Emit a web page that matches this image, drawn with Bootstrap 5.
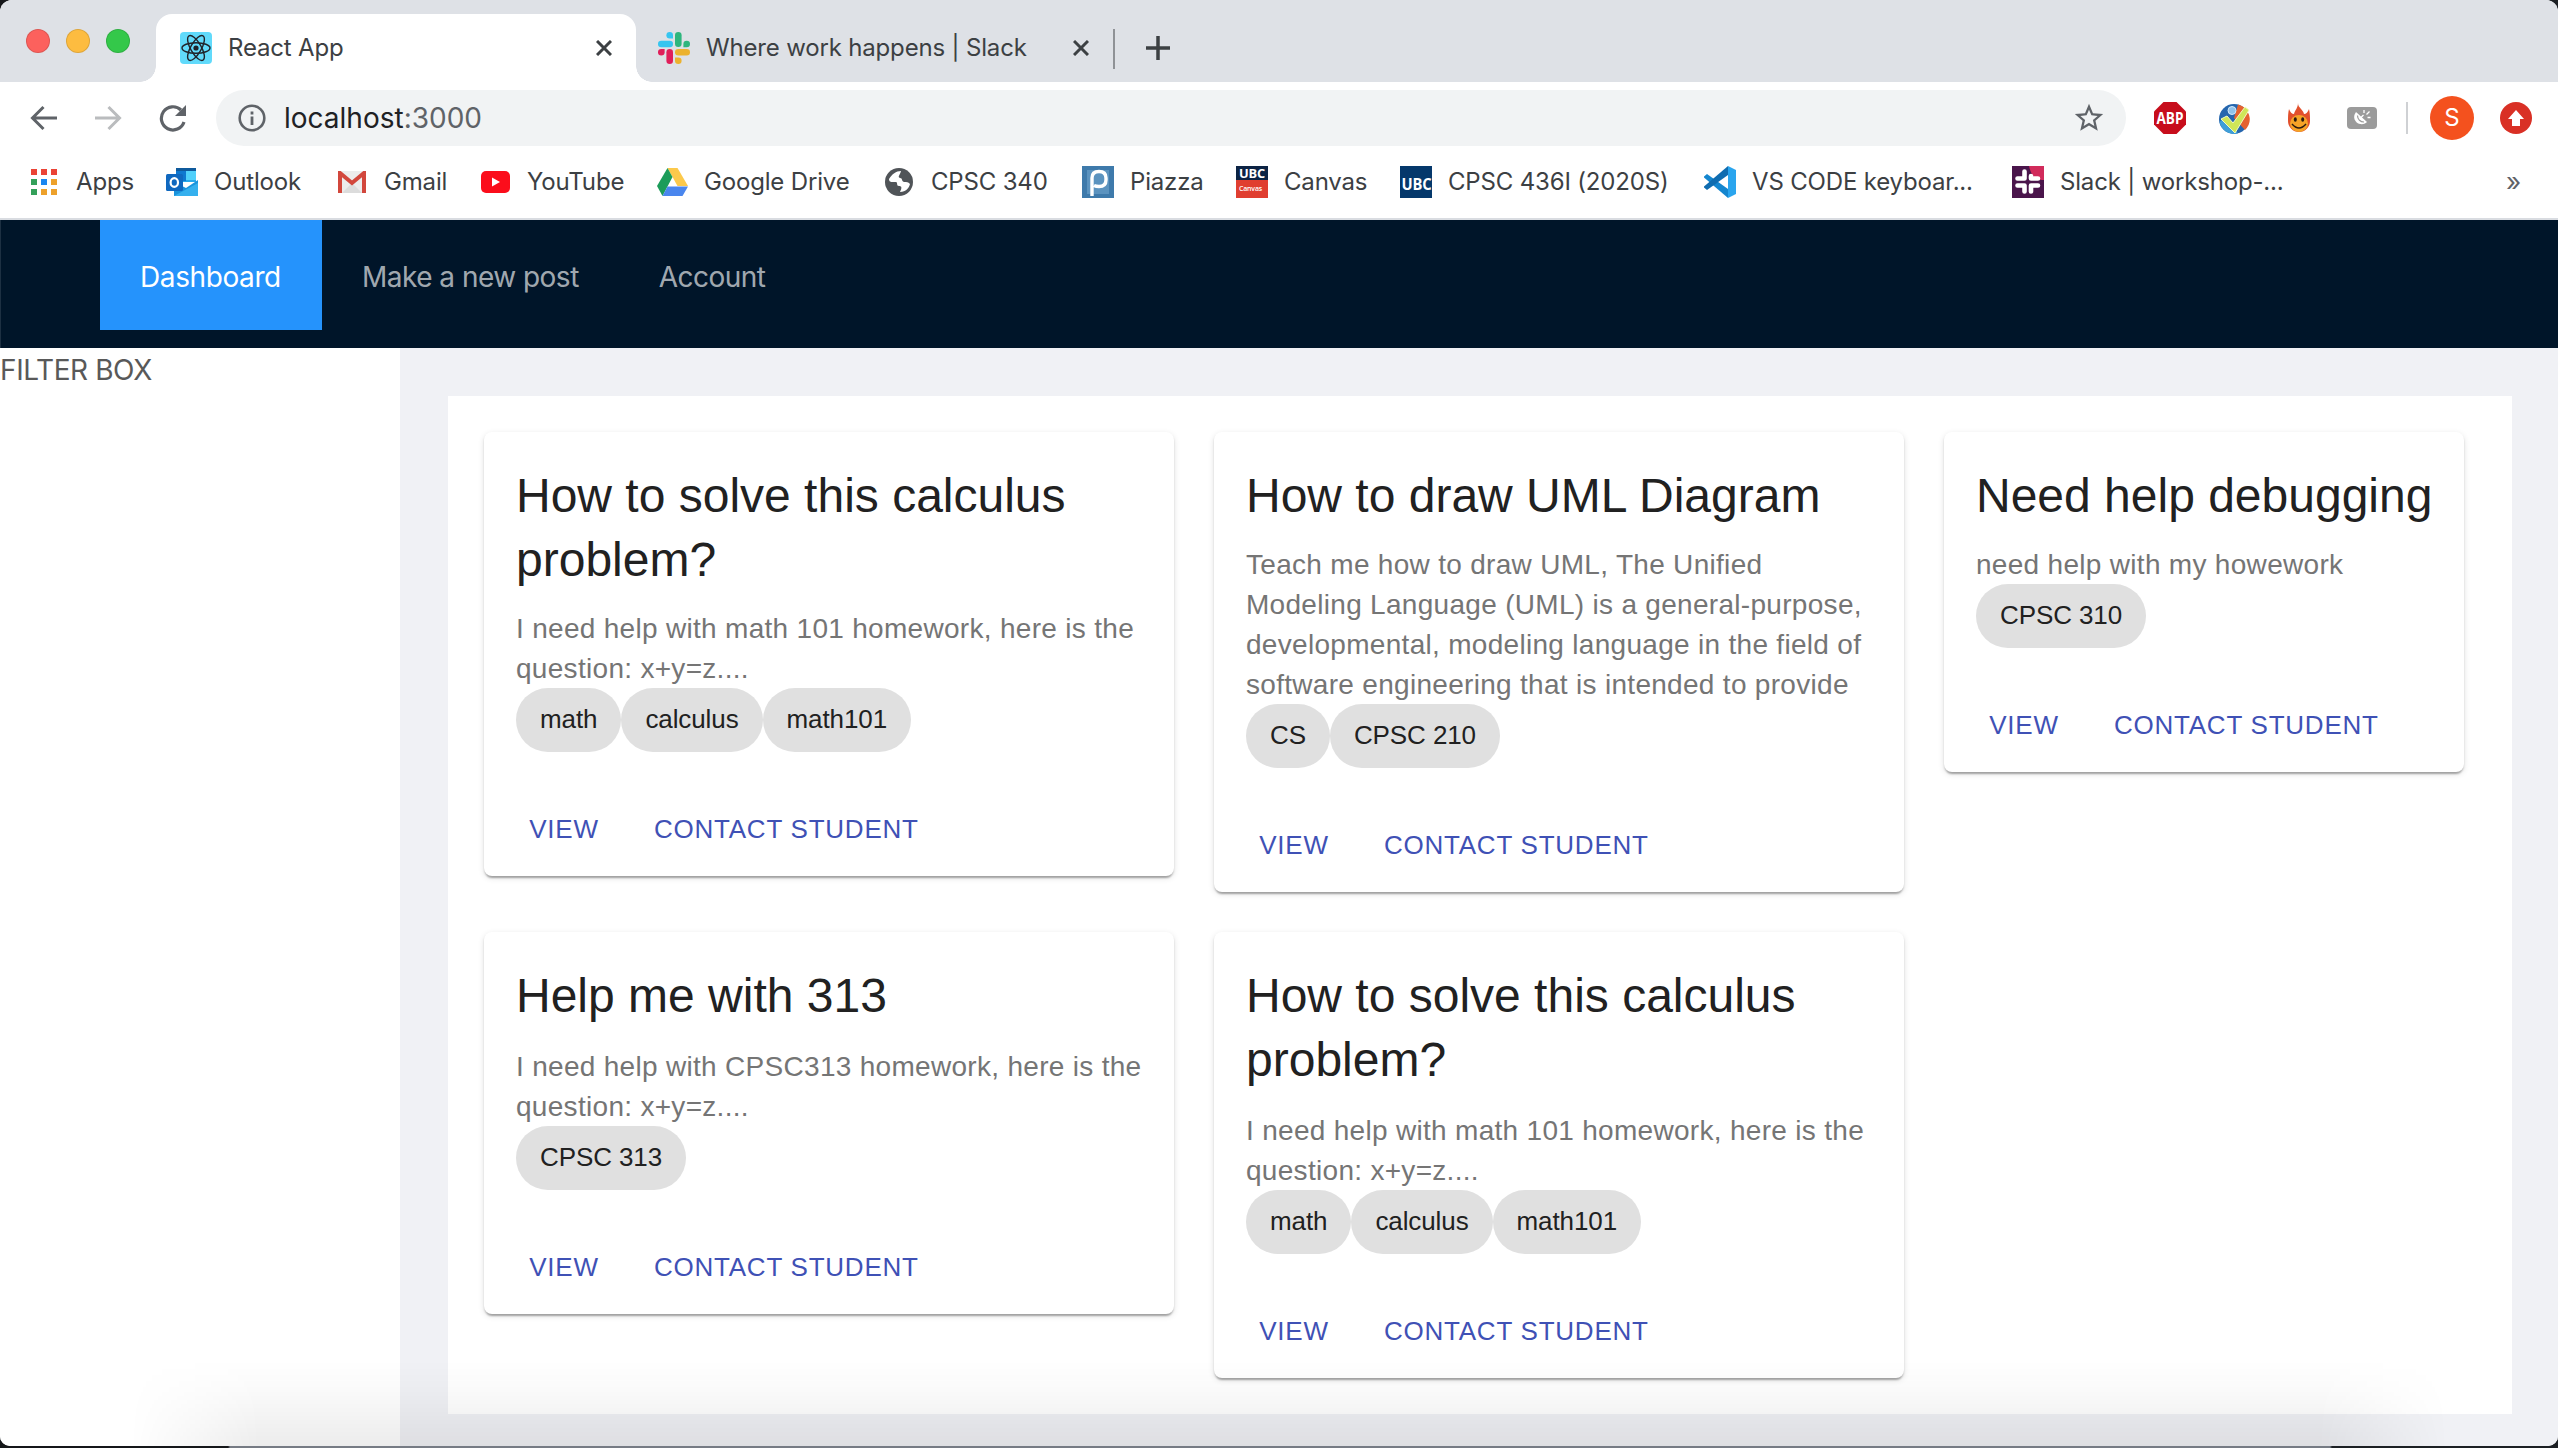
<!DOCTYPE html>
<html lang="en">
<head>
<meta charset="utf-8">
<title>React App</title>
<link href="https://cdn.jsdelivr.net/npm/bootstrap@5.3.0/dist/css/bootstrap.min.css" rel="stylesheet">
<style>
html,body{height:100%;margin:0}
body{background:linear-gradient(90deg,#15171a 228px,#767b84 230px,#767b84 2330px,#1c2024 2332px);overflow:hidden;font-family:Inter,"Noto Sans",sans-serif;color:#3c4043}
svg{display:block;flex:none}
.window{width:2558px;height:1446px;background:#fff;border-radius:12px 12px 10px 10px;overflow:hidden}
.tabstrip{height:82px;background:#dee1e6;padding-left:26px}
.dots{margin-right:22px;padding-bottom:29px}
.dot{width:24px;height:24px;border-radius:50%;border:1px solid rgba(0,0,0,.12);margin-right:16px}
.dot-red{background:#fc615d}
.dot-amber{background:#fdbc40}
.dot-green{background:#34c84a}
.tab-on{width:480px;height:68px;background:#fff;border-radius:16px 16px 0 0;padding:0 24px;margin-left:4px;position:relative}
.tab-on::before,.tab-on::after{content:"";position:absolute;bottom:0;width:16px;height:16px}
.tab-on::before{left:-16px;background:radial-gradient(circle at 0 0,transparent 15.5px,#fff 16px)}
.tab-on::after{right:-16px;background:radial-gradient(circle at 100% 0,transparent 15.5px,#fff 16px)}
.tab-off{height:68px;padding-left:22px;width:477px}
.ui{font-size:24px;line-height:32px;letter-spacing:-.17px;white-space:nowrap}
.tabsep{width:2px;height:40px;background:#8f9296;margin-bottom:13px}
.plus{margin:0 0 22px 31px}
.toolbar{height:72px}
.omni{width:1910px;height:56px;border-radius:28px;background:#f1f3f4;padding:0 20px 0 22px;margin-left:29px}
.url{font-size:28px;color:#202124;letter-spacing:0;margin-left:18px}
.url span{color:#5f6368}
.toolsep{margin-left:29px;width:2px;height:32px;background:#cfd1d4}
.marks{height:64px;padding:0 0 8px 28px}
.bm{width:var(--w);flex:none}
.bm .ico{width:32px;margin-right:16px;display:flex;justify-content:center;flex:none}
.more{margin-right:37px;font-size:26px;color:#5f6368}
.avatar{width:44px;height:44px;border-radius:50%;background:#f4511e;color:#fff;font-size:24px;margin-left:22px}
.rule{height:2px;background:#d9dce1}
.topmenu{height:128px;background:#001529;border-left:1px solid #1d3042;padding-left:99px}
.topmenu .nav-link{height:110px;padding:2px 40px 0;font-size:28px;line-height:110px;letter-spacing:-.52px;color:rgba(255,255,255,.65);white-space:nowrap}
.topmenu .nav-link.active{background:#2593fc;color:#fff;width:222px;letter-spacing:-.4px}
.sider{width:400px;flex:none;background:#fff;font-size:28px;line-height:45px;letter-spacing:-.4px;color:#595959}
.pagebg{background:#f0f1f5;padding:48px 46px 32px 48px}
.board{background:#fff;height:1018px;padding:36px 0 0 36px}
.cards{gap:40px}
.post{border:0;border-radius:8px;width:690px;flex:none;--bs-card-bg:#fff;font-family:"Liberation Sans",Arial,sans-serif;box-shadow:0 4px 2px -2px rgba(0,0,0,.2),0 2px 2px 0 rgba(0,0,0,.14),0 2px 6px 0 rgba(0,0,0,.12)}
.post.narrow{width:520px}
.post .card-body{padding:32px 32px 30px}
.post h2{font-size:48px;line-height:64px;font-weight:400;margin:0 0 17px;color:#212121;white-space:nowrap}
.post p{font-size:28px;line-height:40px;letter-spacing:.3px;color:#757575;margin:0 0 -1px;white-space:nowrap}
.post.low h2{margin-bottom:19px}
.chip{height:64px;border-radius:32px;background:#e0e0e0;color:#212121;font-size:26px;line-height:62px;letter-spacing:-.1px;padding:0 24px}
.post .card-footer{background:none;border:0;padding:16px;height:94px;gap:16px}
.post .btn{--bs-btn-color:#3f51b5;height:62px;min-width:128px;padding:0 10px;border:0;font-size:26px;line-height:62px;letter-spacing:.76px;white-space:nowrap}
.fade-bottom{position:absolute;left:130px;right:110px;top:1360px;height:86px;background:linear-gradient(rgba(0,0,0,0),rgba(0,0,0,.02) 35%,rgba(0,0,0,.075));-webkit-mask-image:linear-gradient(90deg,transparent,#000 130px,#000 calc(100% - 130px),transparent);pointer-events:none}
</style>
<script src="https://cdn.jsdelivr.net/npm/bootstrap@5.3.0/dist/js/bootstrap.bundle.min.js"></script>
</head>
<body>
<div class="window d-flex flex-column">
  <div class="tabstrip d-flex align-items-end flex-shrink-0">
    <div class="dots d-flex"><span class="dot dot-red"></span><span class="dot dot-amber"></span><span class="dot dot-green me-0"></span></div>
    <div class="tab-on d-flex align-items-center">
      <svg width="32" height="32" viewBox="0 0 32 32"><rect width="32" height="32" rx="4" fill="#61dafb"/><g fill="none" stroke="#20232a" stroke-width="1.4"><ellipse cx="16" cy="16" rx="14" ry="5.3"/><ellipse cx="16" cy="16" rx="14" ry="5.3" transform="rotate(60 16 16)"/><ellipse cx="16" cy="16" rx="14" ry="5.3" transform="rotate(120 16 16)"/></g><circle cx="16" cy="16" r="2.6" fill="#20232a"/></svg>
      <span class="ui ms-3">React App</span>
      <svg class="ms-auto" width="16" height="16" viewBox="0 0 16 16"><path d="M1 1l14 14M15 1L1 15" stroke="#3c4043" stroke-width="3"/></svg>
    </div>
    <div class="tab-off d-flex align-items-center">
      <svg width="32" height="32" viewBox="0 0 32 32"><g fill="#36c5f0"><path d="M11.7 0a3.3 3.3 0 0 0 0 6.6H15V3.300A3.300 3.300 0 0 0 11.700 0z"/><rect y="8.700" width="15" height="6.600" rx="3.300"/></g><g fill="#2eb67d"><rect x="17" width="6.600" height="15" rx="3.300"/><path d="M32 12a3.300 3.300 0 0 0-6.600 0v3.300h3.300A3.300 3.300 0 0 0 32 12z"/></g><g fill="#e01e5a"><path d="M0 20.300a3.300 3.300 0 0 0 6.600 0V17H3.300A3.300 3.300 0 0 0 0 20.300z"/><rect x="8.400" y="17" width="6.600" height="15" rx="3.300"/></g><g fill="#ecb22e"><rect x="17" y="17" width="15" height="6.600" rx="3.300"/><path d="M20.300 32a3.300 3.300 0 0 0 0-6.600H17v3.300a3.300 3.300 0 0 0 3.300 3.300z"/></g></svg>
      <span class="ui ms-3">Where work happens | Slack</span>
      <svg class="ms-auto me-4" width="16" height="16" viewBox="0 0 16 16"><path d="M1 1l14 14M15 1L1 15" stroke="#3c4043" stroke-width="3"/></svg>
    </div>
    <span class="tabsep"></span>
    <svg class="plus" width="24" height="24" viewBox="0 0 24 24"><path d="M12 0v24M0 12h24" stroke="#3c4043" stroke-width="3.500"/></svg>
  </div>
  <div class="toolbar d-flex align-items-center flex-shrink-0">
    <svg style="margin-left:30px" width="28" height="26" viewBox="0 0 28 26"><path d="M27 13H3M13.500 2L2.500 13l11 11" fill="none" stroke="#5f6368" stroke-width="3"/></svg>
    <svg style="margin-left:37px" width="28" height="26" viewBox="0 0 28 26"><path d="M0 13h24M13.500 2l11 11-11 11" fill="none" stroke="#babcbe" stroke-width="3"/></svg>
    <svg style="margin-left:36px" width="28" height="28" viewBox="0 0 28 28"><path d="M25 18A11.600 11.600 0 1 1 22 6" fill="none" stroke="#5f6368" stroke-width="3.200"/><path d="M27 1v11H16z" fill="#5f6368"/></svg>
    <div class="omni d-flex align-items-center">
      <svg width="28" height="28" viewBox="0 0 28 28"><circle cx="14" cy="14" r="12.300" fill="none" stroke="#5f6368" stroke-width="2.600"/><path d="M14 12.500V21M14 7.500v3" stroke="#5f6368" stroke-width="2.800"/></svg>
      <div class="url">localhost<span>:3000</span></div>
      <svg class="ms-auto" width="34" height="34" viewBox="0 0 24 24"><path fill="#5f6368" d="M22 9.240l-7.190-.620L12 2 9.190 8.630 2 9.240l5.460 4.730L5.820 21 12 17.270 18.180 21l-1.630-7.030L22 9.240zM12 15.400l-3.760 2.270 1-4.280-3.320-2.880 4.380-.380L12 6.100l1.710 4.040 4.380.380-3.320 2.880 1 4.280L12 15.400z"/></svg>
    </div>
    <svg style="margin-left:28px" width="32" height="32" viewBox="0 0 32 32"><path d="M9.500 0h13L32 9.500v13L22.500 32h-13L0 22.500v-13z" fill="#c70d1c"/><text x="16" y="21.800" font-family="Open Sans" font-weight="700" font-size="15.500" textLength="27" lengthAdjust="spacingAndGlyphs" text-anchor="middle" fill="#fff">ABP</text></svg>
    <svg style="margin-left:32px" width="32" height="32" viewBox="0 0 32 32"><circle cx="16" cy="17" r="15" fill="#2566ae"/><path d="M20 2.500a15 15 0 0 1 7 25.500L16 16z" fill="#e5622f"/><path d="M1.500 20A15 15 0 0 0 20 31.500L8 14z" fill="#3f9fd8"/><circle cx="14" cy="8.500" r="4" fill="#8fc3ec" stroke="#d6e9f8"/><path d="M3 17l6-3 6 7L27 5l4 3-14 23z" fill="#cfe658" stroke="#f3f9c0"/></svg>
    <svg style="margin-left:36px" width="26" height="32" viewBox="0 0 26 32"><path d="M12 1c0 5 5 6 6 11 2 0 4-2 5-5 1 4 1 8 1 12a11 11 0 0 1-22 0c0-4 0-8 1-12 1 3 3 5 5 5C9 8 12 6 12 1z" fill="#e2502c"/><ellipse cx="13" cy="21.500" rx="9" ry="8.500" fill="#f5a327"/><ellipse cx="9.300" cy="17.500" rx="1.500" ry="2.300" fill="#2a1a10"/><ellipse cx="16.700" cy="17.500" rx="1.500" ry="2.300" fill="#2a1a10"/><path d="M6 22q7 8 14 0" fill="none" stroke="#2a1a10" stroke-width="1.500"/></svg>
    <svg style="margin-left:35px" width="30" height="22" viewBox="0 0 30 22"><rect width="30" height="22" rx="4" fill="#9b9b9b"/><path d="M9 5C5 10 8 16 13 17c3 .5 6-.5 7-2z" fill="#fff"/><path d="M10.500 8.500c0 4 3 6.500 6.500 6.500" fill="none" stroke="#9b9b9b" stroke-width="1.200"/><path d="M12.500 12l4-4M17 3v3M23.500 10.500h-3M22.500 4.500l-3 3" stroke="#fff" stroke-width="1.300"/></svg>
    <span class="toolsep"></span>
    <span class="avatar d-flex align-items-center justify-content-center">S</span>
    <svg style="margin-left:26px" width="32" height="32" viewBox="0 0 32 32"><circle cx="16" cy="16" r="16" fill="#d93025"/><path d="M16 8l8 9h-4v7h-8v-7H8z" fill="#fff"/></svg>
  </div>
  <div class="marks d-flex align-items-center flex-shrink-0 ui">
    <div class="bm d-flex align-items-center" style="--w:138px"><span class="ico"><svg width="26" height="26" viewBox="0 0 26 26"><path d="M0 0h6v6H0zM10 0h6v6h-6zM20 0h6v6h-6z" fill="#ea4335"/><path d="M0 10h6v6H0zM0 20h6v6H0z" fill="#34a05a"/><path d="M10 10h6v6h-6z" fill="#1a86f0"/><path d="M20 10h6v6h-6zM10 20h6v6h-6zM20 20h6v6h-6z" fill="#eda12b"/></svg></span>Apps</div>
    <div class="bm d-flex align-items-center" style="--w:170px"><span class="ico"><svg width="32" height="28" viewBox="0 0 32 28"><path d="M10 0h20v14H10z" fill="#28a8ea"/><path d="M10 0h20v3H10z" fill="#0f5a9c"/><path d="M10 3h10v10H10z" fill="#0f78d0"/><path d="M20 3h10v9H20z" fill="#50d0fb"/><path d="M8 14l12 6 12-8v16H8z" fill="#1a93dc"/><path d="M8 28l24-13v13z" fill="#35b0ee"/><rect y="6" width="17" height="17" rx="1.500" fill="#1068bf"/><ellipse cx="8.300" cy="14.500" rx="3.700" ry="4.400" fill="none" stroke="#fff" stroke-width="2.200"/></svg></span>Outlook</div>
    <div class="bm d-flex align-items-center" style="--w:143px"><span class="ico"><svg width="28" height="22" viewBox="0 0 28 22"><rect width="28" height="22" rx="2" fill="#ececec"/><path d="M4 22l10-10 10 10z" fill="#dcdcdc"/><path d="M2 22V2l12 10L26 2v20" fill="none" stroke="#d2473c" stroke-width="4"/></svg></span>Gmail</div>
    <div class="bm d-flex align-items-center" style="--w:177px"><span class="ico"><svg width="29" height="22" viewBox="0 0 29 22"><rect width="29" height="22" rx="5" fill="#fb0d1b"/><path d="M11 6.500l8 4.500-8 4.500z" fill="#fff"/></svg></span>YouTube</div>
    <div class="bm d-flex align-items-center" style="--w:227px"><span class="ico"><svg width="31" height="28" viewBox="0 0 31 28"><path d="M10.500 0h10L31 18H20.500z" fill="#fcc94c"/><path d="M10.500 0L0 18l5.500 10L15.500 9z" fill="#1c9c5a"/><path d="M10.500 18.500H31L25.500 28h-20z" fill="#4a86ee"/></svg></span>Google Drive</div>
    <div class="bm d-flex align-items-center" style="--w:199px"><span class="ico"><svg width="28" height="28" viewBox="0 0 28 28"><circle cx="14" cy="14" r="14" fill="#505458"/><path d="M16 3c-5 0-9 3-12 8 0 4 4 3 7 3 2 0 0 4 3 4s3 2 1 6c6 0 9-4 10-8-2-2-3-2-6-2-3-1-1-4-4-4-3-1 0-3 1-7z" fill="#fff"/></svg></span>CPSC 340</div>
    <div class="bm d-flex align-items-center" style="--w:154px"><span class="ico"><svg width="32" height="32" viewBox="0 0 32 32"><rect width="32" height="32" fill="#3e7aab"/><rect x="5" y="4" width="22" height="24" fill="#5b93bf"/><path d="M10 30V12q0-6.500 7-6.500t7 6.500v2q0 6.500-7 6.500-3 0-5-1" fill="none" stroke="#fff" stroke-width="3.400"/></svg></span>Piazza</div>
    <div class="bm d-flex align-items-center" style="--w:164px"><span class="ico"><svg width="32" height="32" viewBox="0 0 32 32"><rect width="32" height="32" fill="#e03e30"/><rect width="32" height="14" fill="#0c2344"/><text x="16" y="11.500" font-family="Open Sans" font-weight="700" font-size="12" textLength="26" lengthAdjust="spacingAndGlyphs" text-anchor="middle" fill="#fff">UBC</text><text x="14.500" y="24.500" font-family="Open Sans" font-size="7" font-weight="600" textLength="23" lengthAdjust="spacingAndGlyphs" text-anchor="middle" fill="#fff">Canvas</text></svg></span>Canvas</div>
    <div class="bm d-flex align-items-center" style="--w:304px"><span class="ico"><svg width="32" height="32" viewBox="0 0 32 32"><rect width="32" height="32" fill="#05386b"/><text x="16.500" y="24" font-family="Open Sans" font-weight="700" font-size="16" textLength="30" lengthAdjust="spacingAndGlyphs" text-anchor="middle" fill="#fff">UBC</text></svg></span>CPSC 436I (2020S)</div>
    <div class="bm d-flex align-items-center" style="--w:308px"><span class="ico"><svg width="32" height="32" viewBox="0 0 32 32"><path d="M0 10.500L3 8l21 15v9L0 11.500z" fill="#1486cf"/><path d="M0 21.500L3 24 24 9V0L0 20.500z" fill="#0f6cb0"/><path d="M24 0l8 4v24l-8 4z" fill="#2aa5ee"/></svg></span>VS CODE keyboar...</div>
    <div class="bm d-flex align-items-center" style="--w:300px"><span class="ico"><svg width="32" height="32" viewBox="0 0 32 32"><rect width="32" height="32" fill="#4a154b"/><path d="M17 0h15v14q-12 1-15-14z" fill="#d12b5b"/><g stroke="#fff" stroke-width="4.600" stroke-linecap="round"><path d="M12.500 5.500v7M19 10v2.500M5.500 12.500h7M19 12.500h7M5.500 19.500h7M19 19.500h7M12.500 19.500v6M19 19.500v6"/></g></svg></span>Slack | workshop-...</div>
    <span class="more ms-auto">»</span>
  </div>
  <div class="rule flex-shrink-0"></div>
  <nav class="topmenu nav flex-nowrap flex-shrink-0">
    <a class="nav-link active">Dashboard</a><a class="nav-link">Make a new post</a><a class="nav-link">Account</a>
  </nav>
  <div class="d-flex flex-grow-1">
    <aside class="sider">FILTER BOX</aside>
    <main class="pagebg flex-grow-1">
      <div class="board">
        <div class="cards d-flex flex-wrap align-items-start">
          <article class="card post"><div class="card-body"><h2>How to solve this calculus<br>problem?</h2><p>I need help with math 101 homework, here is the<br>question: x+y=z....</p><div class="d-flex"><span class="chip">math</span><span class="chip">calculus</span><span class="chip">math101</span></div></div><div class="card-footer d-flex"><button class="btn">VIEW</button><button class="btn">CONTACT STUDENT</button></div></article>
          <article class="card post"><div class="card-body"><h2>How to draw UML Diagram</h2><p>Teach me how to draw UML, The Unified<br>Modeling Language (UML) is a general-purpose,<br>developmental, modeling language in the field of<br>software engineering that is intended to provide</p><div class="d-flex"><span class="chip">CS</span><span class="chip">CPSC 210</span></div></div><div class="card-footer d-flex"><button class="btn">VIEW</button><button class="btn">CONTACT STUDENT</button></div></article>
          <article class="card post narrow"><div class="card-body"><h2>Need help debugging</h2><p>need help with my howework</p><div class="d-flex"><span class="chip">CPSC 310</span></div></div><div class="card-footer d-flex"><button class="btn">VIEW</button><button class="btn">CONTACT STUDENT</button></div></article>
          <article class="card post low"><div class="card-body"><h2>Help me with 313</h2><p>I need help with CPSC313 homework, here is the<br>question: x+y=z....</p><div class="d-flex"><span class="chip">CPSC 313</span></div></div><div class="card-footer d-flex"><button class="btn">VIEW</button><button class="btn">CONTACT STUDENT</button></div></article>
          <article class="card post low"><div class="card-body"><h2>How to solve this calculus<br>problem?</h2><p>I need help with math 101 homework, here is the<br>question: x+y=z....</p><div class="d-flex"><span class="chip">math</span><span class="chip">calculus</span><span class="chip">math101</span></div></div><div class="card-footer d-flex"><button class="btn">VIEW</button><button class="btn">CONTACT STUDENT</button></div></article>
        </div>
      </div>
    </main>
  </div>
</div>
<div class="fade-bottom"></div>
</body>
</html>
